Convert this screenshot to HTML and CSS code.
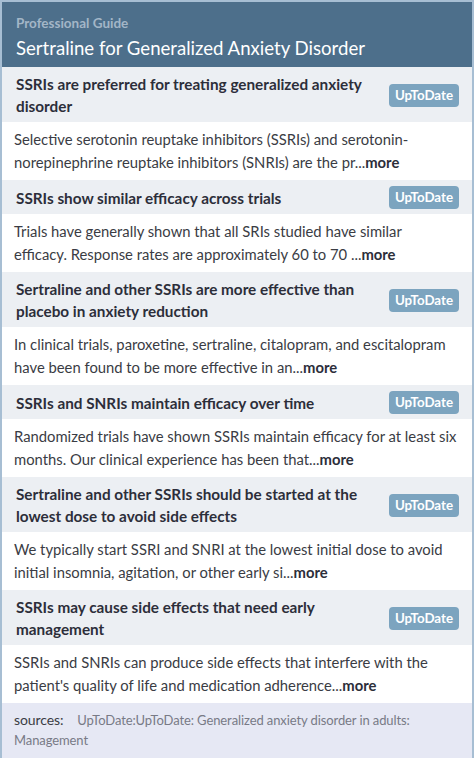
FILE: index.html
```html
<!DOCTYPE html>
<html>
<head>
<meta charset="utf-8">
<link rel="stylesheet" href="styles.css">
</head>
<body>
<div class="card">
  <header class="head">
    <div class="kicker">Professional Guide</div>
    <h1 class="title">Sertraline for Generalized Anxiety Disorder</h1>
  </header>

  <div class="item">
    <div class="claim"><span class="claim-text">SSRIs are preferred for treating generalized anxiety disorder</span><span class="badge">UpToDate</span></div>
    <p class="body">Selective serotonin reuptake inhibitors (SSRIs) and serotonin-norepinephrine reuptake inhibitors (SNRIs) are the pr...<strong class="more">more</strong></p>
  </div>
  <div class="item">
    <div class="claim"><span class="claim-text">SSRIs show similar efficacy across trials</span><span class="badge">UpToDate</span></div>
    <p class="body">Trials have generally shown that all SRIs studied have similar<br>efficacy. Response rates are approximately 60 to 70 ...<strong class="more">more</strong></p>
  </div>
  <div class="item">
    <div class="claim"><span class="claim-text">Sertraline and other SSRIs are more effective than placebo in anxiety reduction</span><span class="badge">UpToDate</span></div>
    <p class="body">In clinical trials, paroxetine, sertraline, citalopram, and escitalopram have been found to be more effective in an...<strong class="more">more</strong></p>
  </div>
  <div class="item">
    <div class="claim"><span class="claim-text">SSRIs and SNRIs maintain efficacy over time</span><span class="badge">UpToDate</span></div>
    <p class="body">Randomized trials have shown SSRIs maintain efficacy for at least six months. Our clinical experience has been that...<strong class="more">more</strong></p>
  </div>
  <div class="item">
    <div class="claim"><span class="claim-text">Sertraline and other SSRIs should be started at the lowest dose to avoid side effects</span><span class="badge">UpToDate</span></div>
    <p class="body">We typically start SSRI and SNRI at the lowest initial dose to avoid initial insomnia, agitation, or other early si...<strong class="more">more</strong></p>
  </div>
  <div class="item">
    <div class="claim"><span class="claim-text">SSRIs may cause side effects that need early management</span><span class="badge">UpToDate</span></div>
    <p class="body">SSRIs and SNRIs can produce side effects that interfere with the patient's quality of life and medication adherence...<strong class="more">more</strong></p>
  </div>

  <div class="sources"><span class="src-label">sources:</span><span class="src-text">UpToDate:UpToDate: Generalized anxiety disorder in adults: Management</span></div>
</div>
</body>
</html>
```

FILE: styles.css
```css
html, body {
  margin: 0;
  padding: 0;
  background: #ffffff;
}
body {
  font-family: Lato, "Noto Sans", sans-serif;
  width: 474px;
  height: 758px;
  overflow: hidden;
}
.card {
  box-sizing: border-box;
  width: 474px;
  height: 758px;
  border: 2px solid #a7bed3;
  border-bottom: none;
  background: #ffffff;
  display: flex;
  flex-direction: column;
}
.head {
  background: #4d6f8b;
  padding: 13px 14px 9px;
  height: 65px;
  box-sizing: border-box;
}
.kicker {
  font-size: 13.5px;
  font-weight: 700;
  color: #a3b6c7;
  line-height: 16px;
}
.title {
  margin: 5px 0 0;
  font-size: 18.6px;
  font-weight: 400;
  color: #ffffff;
  line-height: 24px;
}
.claim {
  display: flex;
  align-items: center;
  justify-content: space-between;
  gap: 16px;
  background: #eceff3;
  padding: 6px 13px 5px 14px;
}
.claim-text {
  font-size: 15.3px;
  font-weight: 700;
  color: #2c2e3a;
  line-height: 22px;
  max-width: 360px;
}
.badge {
  flex: none;
  background: #7ca4bf;
  color: #ffffff;
  font-size: 13.3px;
  font-weight: 700;
  line-height: 23px;
  padding: 0 6px;
  border-radius: 4px;
}
.body {
  margin: 0;
  padding: 6px 10px 6px 12px;
  font-size: 14.8px;
  line-height: 23px;
  color: #3a3c44;
}
.more {
  font-weight: 700;
  color: #2c2e3a;
}
.sources {
  flex: 1;
  background: #e6e8f4;
  padding: 7px 12px 10px;
  font-size: 13px;
  letter-spacing: -0.1px;
  line-height: 20px;
  color: #787a86;
  box-sizing: border-box;
}
.src-label {
  color: #3a3c44;
  font-size: 14px;
  margin-right: 14px;
}
```
